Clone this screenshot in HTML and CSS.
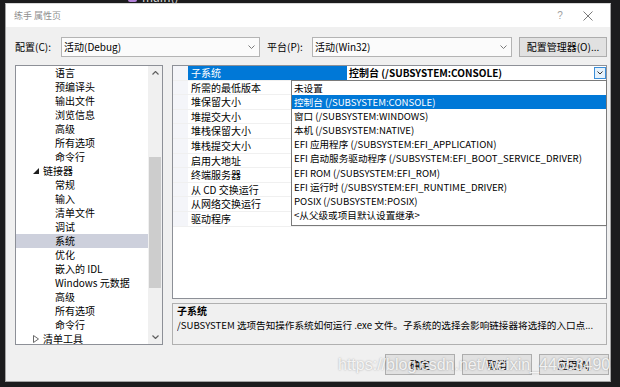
FILE: index.html
```html
<!DOCTYPE html>
<html lang="zh-CN">
<head>
<meta charset="utf-8">
<title>练手 属性页</title>
<link rel="stylesheet" href="styles.css">
</head>
<body>
<div class="desk">
  <div class="bg-code"><span class="bg-caret">▾</span><span class="bg-icon"></span><span class="bg-fn">main()</span></div>
  <div class="dialog">
    <div class="titlebar">
      <span class="title">练手 属性页</span>
      <span class="tb-help">?</span>
      <span class="tb-close"><svg width="10" height="10" viewBox="0 0 10 10"><path d="M0.5 0.5 L9.5 9.5 M9.5 0.5 L0.5 9.5"/></svg></span>
    </div>

    <div class="config-row">
      <span class="cfg-label">配置(C):</span>
      <div class="combo"><span class="combo-text">活动(Debug)</span><svg class="chev" width="7" height="4" viewBox="0 0 7 4"><path d="M0.5 0.5 L3.5 3.5 L6.5 0.5"/></svg></div>
      <span class="cfg-label plat">平台(P):</span>
      <div class="combo combo-wide"><span class="combo-text">活动(Win32)</span><svg class="chev" width="7" height="4" viewBox="0 0 7 4"><path d="M0.5 0.5 L3.5 3.5 L6.5 0.5"/></svg></div>
      <button class="btn btn-mgr">配置管理器(O)...</button>
    </div>

    <div class="main">
      <div class="tree">
        <ul class="tree-list">
          <li class="child">语言</li>
          <li class="child">预编译头</li>
          <li class="child">输出文件</li>
          <li class="child">浏览信息</li>
          <li class="child">高级</li>
          <li class="child">所有选项</li>
          <li class="child">命令行</li>
          <li class="parent"><svg class="tri" width="6" height="6" viewBox="0 0 6 6"><path d="M6 0 L6 6 L0 6 Z" fill="#1e1e1e"/></svg>链接器</li>
          <li class="child">常规</li>
          <li class="child">输入</li>
          <li class="child">清单文件</li>
          <li class="child">调试</li>
          <li class="child selected">系统</li>
          <li class="child">优化</li>
          <li class="child">嵌入的 IDL</li>
          <li class="child">Windows 元数据</li>
          <li class="child">高级</li>
          <li class="child">所有选项</li>
          <li class="child">命令行</li>
          <li class="parent"><svg class="tri" width="6" height="8" viewBox="0 0 6 8"><path d="M0.5 0.5 L5.5 4 L0.5 7.5 Z" fill="none" stroke="#6a6a6a"/></svg>清单工具</li>
        </ul>
        <div class="vscroll">
          <div class="sb-arrow"><svg width="7" height="4" viewBox="0 0 7 4"><path d="M0.5 3.5 L3.5 0.5 L6.5 3.5"/></svg></div>
          <div class="sb-thumb"></div>
          <div class="sb-space"></div>
          <div class="sb-arrow"><svg width="7" height="4" viewBox="0 0 7 4"><path d="M0.5 0.5 L3.5 3.5 L6.5 0.5"/></svg></div>
        </div>
      </div>

      <div class="right">
        <div class="grid">
          <div class="prow psel"><span class="strip"></span><span class="pname">子系统</span><span class="pval"><b class="pval-text">控制台 (/SUBSYSTEM:CONSOLE)</b><span class="dropbtn"><svg width="6" height="4" viewBox="0 0 6 4"><path d="M0.5 0.5 L3 3 L5.5 0.5"/></svg></span></span></div>
          <div class="prow"><span class="strip"></span><span class="pname">所需的最低版本</span><span class="pval"></span></div>
          <div class="prow"><span class="strip"></span><span class="pname">堆保留大小</span><span class="pval"></span></div>
          <div class="prow"><span class="strip"></span><span class="pname">堆提交大小</span><span class="pval"></span></div>
          <div class="prow"><span class="strip"></span><span class="pname">堆栈保留大小</span><span class="pval"></span></div>
          <div class="prow"><span class="strip"></span><span class="pname">堆栈提交大小</span><span class="pval"></span></div>
          <div class="prow"><span class="strip"></span><span class="pname">启用大地址</span><span class="pval"></span></div>
          <div class="prow"><span class="strip"></span><span class="pname">终端服务器</span><span class="pval"></span></div>
          <div class="prow"><span class="strip"></span><span class="pname">从 CD 交换运行</span><span class="pval"></span></div>
          <div class="prow"><span class="strip"></span><span class="pname">从网络交换运行</span><span class="pval"></span></div>
          <div class="prow"><span class="strip"></span><span class="pname">驱动程序</span><span class="pval"></span></div>

          <ul class="droplist">
            <li>未设置</li>
            <li class="dsel">控制台 (/SUBSYSTEM:CONSOLE)</li>
            <li>窗口 (/SUBSYSTEM:WINDOWS)</li>
            <li>本机 (/SUBSYSTEM:NATIVE)</li>
            <li>EFI 应用程序 (/SUBSYSTEM:EFI_APPLICATION)</li>
            <li>EFI 启动服务驱动程序 (/SUBSYSTEM:EFI_BOOT_SERVICE_DRIVER)</li>
            <li>EFI ROM (/SUBSYSTEM:EFI_ROM)</li>
            <li>EFI 运行时 (/SUBSYSTEM:EFI_RUNTIME_DRIVER)</li>
            <li>POSIX (/SUBSYSTEM:POSIX)</li>
            <li>&lt;从父级或项目默认设置继承&gt;</li>
          </ul>
        </div>
        <div class="desc">
          <div class="desc-title">子系统</div>
          <div class="desc-text">/SUBSYSTEM 选项告知操作系统如何运行 .exe 文件。子系统的选择会影响链接器将选择的入口点...</div>
        </div>
      </div>
    </div>

    <div class="footer">
      <button class="btn btn-foot">确定</button>
      <button class="btn btn-foot">取消</button>
      <button class="btn btn-foot">应用(A)</button>
    </div>
  </div>
  <div class="watermark">https://blog.csdn.net/weixin_44653490</div>
</div>
</body>
</html>
```

FILE: styles.css
```css
html, body {
  margin: 0;
  padding: 0;
}
body {
  width: 620px;
  height: 387px;
  overflow: hidden;
  background: #1c1c1d;
  font-family: "Noto Sans CJK SC", sans-serif;
  font-size: 10px;
  color: #000;
}
.desk {
  position: relative;
  width: 620px;
  height: 387px;
  box-sizing: border-box;
  padding: 3px 9px 5px 5px;
}
.bg-code {
  position: absolute;
  left: 118px;
  top: -9px;
  font-size: 12px;
  line-height: 12px;
  color: #d4d4d4;
  display: flex;
  align-items: center;
  gap: 5px;
}
.bg-caret { color: #999; font-size: 9px; }
.bg-icon {
  width: 9px;
  height: 9px;
  background: #b180d7;
  border-radius: 2px;
}
.dialog {
  width: 606px;
  height: 379px;
  box-sizing: border-box;
  background: #f0f0f0;
  border: 1px solid #a3a3a3;
  border-top-color: #d8d8d8;
  display: flex;
  flex-direction: column;
}

/* title bar */
.titlebar {
  height: 23px;
  background: #ffffff;
  display: flex;
  align-items: center;
  padding-left: 8px;
  flex-shrink: 0;
}
.title {
  flex: 1;
  font-size: 9px;
  color: #8f8f8f;
  line-height: 12px;
  padding-top: 1px;
}
.tb-help {
  width: 20px;
  text-align: center;
  color: #a0a0a0;
  font-size: 10px;
  font-family: "Liberation Sans", sans-serif;
  margin-right: 13px;
}
.tb-close {
  width: 10px;
  height: 10px;
  margin-right: 17px;
  display: flex;
}
.tb-close path { stroke: #7a7a7a; stroke-width: 1; fill: none; }

/* config row */
.config-row {
  display: flex;
  align-items: center;
  height: 20px;
  margin-top: 10px;
  padding: 0 3px 0 9px;
  flex-shrink: 0;
}
.cfg-label {
  width: 46px;
  line-height: 14px;
  flex-shrink: 0;
}
.cfg-label.plat {
  width: 45px;
  padding-left: 7px;
}
.combo {
  width: 199px;
  height: 20px;
  box-sizing: border-box;
  border: 1px solid #b4b4b4;
  background: #fbfbfb;
  display: flex;
  align-items: center;
  padding: 0 4px 0 2px;
  flex-shrink: 0;
}
.combo-wide { width: 200px; }
.combo-text { flex: 1; line-height: 14px; }
.chev path { stroke: #7b7b7b; stroke-width: 1; fill: none; }
.btn {
  font-family: "Noto Sans CJK SC", sans-serif;
  font-size: 10px;
  line-height: 14px;
  color: #000;
  background: #e1e1e1;
  border: 1px solid #adadad;
  padding: 0;
  box-sizing: border-box;
}
.btn-mgr {
  width: 88px;
  height: 20px;
  margin-left: 7px;
}

/* main area */
.main {
  display: flex;
  gap: 9px;
  height: 280px;
  margin-top: 8px;
  padding: 0 3px 0 9px;
  flex-shrink: 0;
}
.tree {
  width: 148px;
  height: 280px;
  box-sizing: border-box;
  border: 1px solid #8d9097;
  background: #fff;
  display: flex;
  overflow: hidden;
  flex-shrink: 0;
}
.tree-list {
  list-style: none;
  margin: 0;
  padding: 0;
  width: 132px;
  flex-shrink: 0;
}
.tree-list li {
  height: 14px;
  line-height: 14px;
  white-space: nowrap;
  display: flex;
  align-items: center;
}
.tree-list .child { padding-left: 39px; }
.tree-list .parent { padding-left: 17px; }
.tree-list .tri { margin-right: 4px; }
.tree-list .selected { background: #cdd0dc; }
.vscroll {
  width: 14px;
  background: #f0f0f0;
  display: flex;
  flex-direction: column;
}
.sb-arrow {
  height: 14px;
  display: flex;
  align-items: center;
  justify-content: center;
  flex-shrink: 0;
}
.sb-arrow path { stroke: #606060; stroke-width: 1.2; fill: none; }
.sb-thumb {
  margin: 77px 1px 0 1px;
  height: 131px;
  background: #cdcdcd;
  flex-shrink: 0;
}
.sb-space { flex: 1; }

.right {
  width: 435px;
  display: flex;
  flex-direction: column;
  gap: 4px;
  flex-shrink: 0;
}
.grid {
  position: relative;
  height: 234px;
  box-sizing: border-box;
  border: 1px solid #8d9097;
  background: #fff;
  flex-shrink: 0;
}
.prow {
  display: grid;
  grid-template-columns: 15px 159px 1fr;
  height: 14.6px;
  box-sizing: border-box;
  border-bottom: 1px solid #f0f0f0;
}
.strip { background: #f4f5f9; }
.pname {
  padding-left: 3px;
  line-height: 13.6px;
  white-space: nowrap;
}
.pval {
  display: flex;
  align-items: center;
  padding-left: 2px;
}
.psel .pname { background: #0078d7; color: #fff; }
.pval-text {
  flex: 1;
  line-height: 13.6px;
  font-weight: bold;
  white-space: nowrap;
}
.dropbtn {
  width: 12px;
  height: 12px;
  box-sizing: border-box;
  border: 1px solid #3c8ed8;
  background: #e5f1fb;
  display: flex;
  align-items: center;
  justify-content: center;
}
.dropbtn path { stroke: #333; stroke-width: 1; fill: none; }

.droplist {
  position: absolute;
  left: 118px;
  top: 14px;
  width: 316px;
  height: 146px;
  box-sizing: border-box;
  margin: 0;
  padding: 0;
  list-style: none;
  background: #fff;
  border: 1px solid #7a7a7a;
  font-size: 9.6px;
}
.droplist li {
  height: 14.1px;
  line-height: 14.1px;
  padding-left: 2px;
  white-space: nowrap;
}
.droplist .dsel { background: #0078d7; color: #fff; }

.desc {
  height: 42px;
  box-sizing: border-box;
  border: 1px solid #b0b0b0;
  background: #f0f0f0;
  padding: 0 4px;
  flex-shrink: 0;
}
.desc-title {
  font-weight: bold;
  line-height: 14px;
}
.desc-text {
  font-size: 9.6px;
  line-height: 14px;
  white-space: nowrap;
  overflow: hidden;
}

/* footer */
.footer {
  display: flex;
  justify-content: flex-end;
  gap: 7px;
  margin-top: 9px;
  padding-right: 1px;
  flex-shrink: 0;
}
.btn-foot {
  width: 70px;
  height: 21px;
}

.watermark {
  position: absolute;
  left: 338px;
  top: 356px;
  font-family: "Liberation Sans", sans-serif;
  font-size: 16px;
  color: rgba(255, 255, 255, 0.85);
  text-shadow: 0 0 2px rgba(0, 0, 0, 0.35);
  white-space: nowrap;
}
```
